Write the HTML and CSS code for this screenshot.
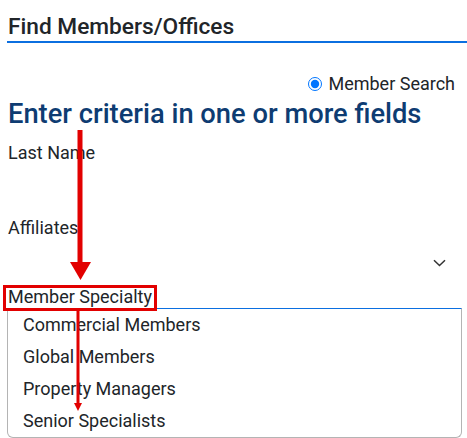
FILE: index.html
```html
<!DOCTYPE html>
<html lang="en">
<head>
<meta charset="utf-8">
<title>Find Members/Offices</title>
<link rel="stylesheet" href="styles.css">
</head>
<body>
<div class="page">
  <h2 class="title">Find Members/Offices</h2>
  <div class="search-type">
    <label class="radio-label"><input type="radio" name="stype" checked> Member Search</label>
  </div>
  <h1 class="heading">Enter criteria in one or more fields</h1>

  <div class="field field-first">
    <label class="field-label" for="lastname">Last Name</label>
    <input class="text-input" id="lastname" type="text">
  </div>

  <div class="field">
    <label class="field-label">Affiliates</label>
    <div class="select">
      <svg class="chevron" width="13" height="8" viewBox="0 0 13 8"><path d="M1 1.2 L6.5 6.5 L12 1.2" fill="none" stroke="#333" stroke-width="1.5"/></svg>
    </div>
  </div>

  <div class="field">
    <label class="field-label highlight">Member Specialty</label>
    <ul class="listbox">
      <li>Commercial Members</li>
      <li>Global Members</li>
      <li>Property Managers</li>
      <li>Senior Specialists</li>
    </ul>
  </div>

  <svg class="arrow arrow-big" width="26" height="152" viewBox="0 0 26 152">
    <rect x="9.5" y="0" width="5" height="134" fill="#e20000"/>
    <polygon points="2,132 23,132 12.5,150" fill="#e20000"/>
  </svg>
  <svg class="arrow arrow-small" width="12" height="102" viewBox="0 0 12 102">
    <rect x="3.5" y="0" width="3" height="94" fill="#e20000"/>
    <polygon points="1,92 9,92 5,100" fill="#e20000"/>
  </svg>
</div>
</body>
</html>
```

FILE: styles.css
```css
html, body {
  margin: 0;
  padding: 0;
  background: #ffffff;
}

body {
  font-family: Roboto, "Liberation Sans", Arial, sans-serif;
  color: #212529;
  overflow: hidden;
}

.page {
  position: relative;
  padding-left: 8px;
  padding-top: 14px;
}

.title {
  margin: 0 0 0 -1px;
  font-size: 22.7px;
  font-weight: 500;
  line-height: 26px;
  padding: 0 0 1px 1px;
  border-bottom: 2px solid #0b6fe0;
}

.search-type {
  display: flex;
  justify-content: flex-end;
  margin-top: 30px;
  margin-right: 12px;
}

.radio-label {
  display: flex;
  align-items: center;
  font-size: 18px;
  line-height: 21px;
}

.radio-label input {
  margin: 0 6px 0 0;
  width: 14px;
  height: 14px;
}

.heading {
  margin: 4px 0 0 0;
  font-size: 27.3px;
  font-weight: 500;
  line-height: 32px;
  color: #0e3c72;
}

.field {
  display: flex;
  flex-direction: column;
  margin-right: 5px;
}

.field-first {
  margin-top: 12px;
}

.field-label {
  font-size: 18px;
  line-height: 21px;
  align-self: flex-start;
}

.text-input {
  height: 54px;
  border: 0;
  padding: 0;
  margin: 0;
  background: transparent;
  outline: none;
  font: inherit;
}

.select {
  height: 48px;
  display: flex;
  align-items: center;
  justify-content: flex-end;
  padding-right: 16px;
}

.chevron {
  display: block;
  margin-top: 1px;
}

.highlight {
  position: relative;
  line-height: 22px;
}

.highlight::after {
  content: "";
  position: absolute;
  top: -1px;
  bottom: -3px;
  left: -5px;
  right: -5px;
  border: 3px solid #e20000;
}

.listbox {
  list-style: none;
  margin: 0 0 0 -1px;
  padding: 0;
  border: 1px solid #b4b4b4;
  border-top-color: #0b6fe0;
  border-radius: 0 0 6px 6px;
}

.listbox li {
  font-size: 18px;
  line-height: 32px;
  padding-left: 15px;
}

.arrow {
  position: absolute;
  display: block;
}

.arrow-big {
  left: 68px;
  top: 130px;
}

.arrow-small {
  left: 73px;
  top: 311px;
}
```
